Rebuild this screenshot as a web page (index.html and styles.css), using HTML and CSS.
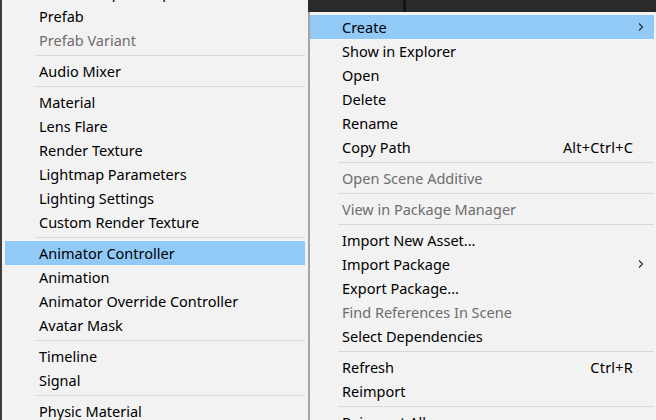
FILE: index.html
```html
<!DOCTYPE html>
<html>
<head>
<meta charset="utf-8">
<link rel="stylesheet" href="styles.css">
</head>
<body>
<div class="desk">
  <div class="menu menu-left">
    <div class="item first"><span class="label">Scene Template Pipeline</span></div>
    <div class="item"><span class="label">Prefab</span></div>
    <div class="item disabled"><span class="label">Prefab Variant</span></div>
    <div class="sep"></div>
    <div class="item"><span class="label">Audio Mixer</span></div>
    <div class="sep"></div>
    <div class="item"><span class="label">Material</span></div>
    <div class="item"><span class="label">Lens Flare</span></div>
    <div class="item"><span class="label">Render Texture</span></div>
    <div class="item"><span class="label">Lightmap Parameters</span></div>
    <div class="item"><span class="label">Lighting Settings</span></div>
    <div class="item"><span class="label">Custom Render Texture</span></div>
    <div class="sep"></div>
    <div class="item active"><span class="label">Animator Controller</span></div>
    <div class="item"><span class="label">Animation</span></div>
    <div class="item"><span class="label">Animator Override Controller</span></div>
    <div class="item"><span class="label">Avatar Mask</span></div>
    <div class="sep"></div>
    <div class="item"><span class="label">Timeline</span></div>
    <div class="item"><span class="label">Signal</span></div>
    <div class="sep"></div>
    <div class="item"><span class="label">Physic Material</span></div>
  </div>
  <div class="right-col">
    <div class="topbar"><div class="topbar-a"></div><div class="topbar-b"></div></div>
    <div class="menu menu-right">
      <div class="item active"><span class="label">Create</span><span class="arrow"><svg width="8" height="10" viewBox="0 0 8 10"><path d="M2 1.5 L5.5 5 L2 8.5" fill="none" stroke="#333" stroke-width="1.3"/></svg></span></div>
      <div class="item"><span class="label">Show in Explorer</span></div>
      <div class="item"><span class="label">Open</span></div>
      <div class="item"><span class="label">Delete</span></div>
      <div class="item"><span class="label">Rename</span></div>
      <div class="item"><span class="label">Copy Path</span><span class="shortcut">Alt+Ctrl+C</span></div>
      <div class="sep"></div>
      <div class="item disabled"><span class="label">Open Scene Additive</span></div>
      <div class="sep"></div>
      <div class="item disabled"><span class="label">View in Package Manager</span></div>
      <div class="sep"></div>
      <div class="item"><span class="label">Import New Asset...</span></div>
      <div class="item"><span class="label">Import Package</span><span class="arrow"><svg width="8" height="10" viewBox="0 0 8 10"><path d="M2 1.5 L5.5 5 L2 8.5" fill="none" stroke="#333" stroke-width="1.3"/></svg></span></div>
      <div class="item"><span class="label">Export Package...</span></div>
      <div class="item disabled"><span class="label">Find References In Scene</span></div>
      <div class="item"><span class="label">Select Dependencies</span></div>
      <div class="sep"></div>
      <div class="item"><span class="label">Refresh</span><span class="shortcut">Ctrl+R</span></div>
      <div class="item"><span class="label">Reimport</span></div>
      <div class="sep"></div>
      <div class="item"><span class="label">Reimport All</span></div>
    </div>
  </div>
</div>
</body>
</html>
```

FILE: styles.css
```css
html, body {
  margin: 0;
  padding: 0;
  height: 100%;
  overflow: hidden;
  background: #3c3c3c;
}
body {
  font-family: "Noto Sans", "Open Sans", sans-serif;
  font-size: 14.5px;
  color: #000;
}
.desk {
  display: flex;
  height: 420px;
  padding-left: 2px;
}
.menu {
  background: #f2f2f2;
  box-sizing: border-box;
}
.menu-left {
  width: 306px;
  padding: 0 3px;
  flex: none;
  overflow: hidden;
}
.right-col {
  flex: 1;
  display: flex;
  flex-direction: column;
  min-width: 0;
}
.topbar {
  height: 12px;
  display: flex;
  background: #2a2a2a;
  flex: none;
}
.topbar-a {
  width: 95px;
  border-right: 3px solid #141414;
}
.topbar-b {
  flex: 1;
}
.menu-right {
  flex: 1;
  padding: 3px 2px 0 0;
  border-left: 2px solid #a5a5a5;
  overflow: hidden;
}
.item {
  height: 24px;
  display: flex;
  align-items: center;
  white-space: nowrap;
}
.menu-left .item {
  padding-left: 34px;
}
.menu-left .item.first {
  margin-top: -20px;
}
.menu-right .item {
  padding-left: 32px;
  padding-right: 12px;
}
.item.active {
  background: #91c9f7;
}
.item.disabled {
  color: #6d6d6d;
}
.label {
  flex: 1;
}
.shortcut {
  padding-right: 9px;
  letter-spacing: 0.2px;
}
.arrow {
  display: flex;
  align-items: center;
  margin-right: -3px;
}
.sep {
  height: 7px;
  display: flex;
  align-items: center;
}
.sep::after {
  content: "";
  display: block;
  height: 1px;
  flex: 1;
  background: #d7d7d7;
}
.menu-left .sep {
  padding-left: 30px;
}
.menu-right .sep {
  padding-left: 28px;
}
```
